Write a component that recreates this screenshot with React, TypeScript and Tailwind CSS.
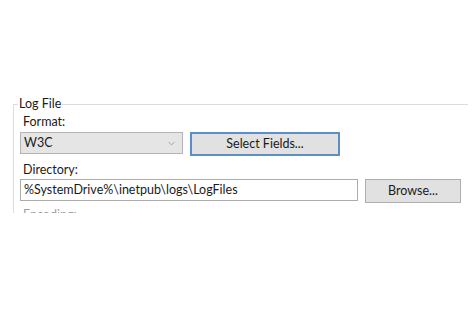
import { ChevronDown } from 'lucide-react';

export default function App() {
  return (
    <div className="relative w-[474px] h-[310px] bg-white overflow-hidden text-[12.5px] text-[#1a1a1a]" style={{ fontFamily: 'Lato, "Noto Sans", sans-serif' }}>
      <div className="h-[97px]" />
      <div className="ml-[13px] h-[116px] overflow-hidden">
        <fieldset className="w-[455px] h-[140px] border-t border-l border-[#dcdcdc] pl-[6px] m-0">
          <legend className="-ml-[2px] px-[1px] leading-[14px]">Log File</legend>
          <div className="mt-[3px] pl-[3px] leading-[16px]">Format:</div>
          <div className="mt-[2px] flex items-start gap-[7px]">
            <div className="w-[163px] h-[22px] bg-[#e5e5e5] border border-[#b4b4b4] flex items-center justify-between pl-[3px] pr-[5px]">
              <span>W3C</span>
              <ChevronDown className="w-[11px] h-[11px] text-[#8a8a8a]" strokeWidth={1.5} />
            </div>
            <button className="w-[150px] h-[24px] bg-[#e1e1e1] border-2 border-[#5b8dc8] flex items-center justify-center leading-none">
              Select Fields...
            </button>
          </div>
          <div className="mt-[6px] pl-[3px] leading-[16px]">Directory:</div>
          <div className="mt-[1px] flex items-start gap-[7px]">
            <div className="w-[338px] h-[22px] bg-white border border-[#acacac] flex items-center pl-[3px]">
              %SystemDrive%\inetpub\logs\LogFiles
            </div>
            <button className="w-[96px] h-[24px] bg-[#e1e1e1] border border-[#adadad] flex items-center justify-center leading-none">
              Browse...
            </button>
          </div>
          <div className="mt-[4px] pl-[3px] leading-[16px] text-[#a0a0a0]">Encoding:</div>
        </fieldset>
      </div>
    </div>
  );
}
